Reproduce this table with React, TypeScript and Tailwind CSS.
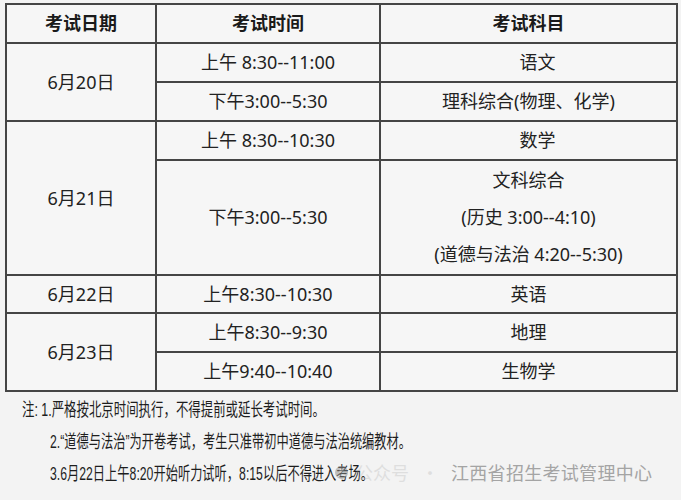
import React from "react";

const cell = "border-2 border-[#454545] text-center align-middle p-0";

export default function App() {
  return (
    <div
      className="w-[681px] h-[500px] bg-[#f3f3f3] overflow-hidden relative text-[#222]"
      style={{ fontFamily: '"Noto Sans", "Noto Sans CJK SC", sans-serif' }}
    >
      <div className="pt-[3px] pl-[5px]">
        <table className="border-collapse bg-[#f6f6f6] text-[18px] w-[671px] table-fixed">
          <colgroup>
            <col className="w-[150px]" />
            <col className="w-[224px]" />
            <col className="w-[297px]" />
          </colgroup>
          <tbody>
            <tr className="h-[39px] font-bold text-[#1a1a1a]">
              <td className={cell}>考试日期</td>
              <td className={cell}>考试时间</td>
              <td className={cell}>考试科目</td>
            </tr>
            <tr className="h-[39px]">
              <td className={cell} rowSpan={2}>6月20日</td>
              <td className={cell}>上午 8:30--11:00</td>
              <td className={cell + " pl-[18px]"}>语文</td>
            </tr>
            <tr className="h-[39px]">
              <td className={cell}>下午3:00--5:30</td>
              <td className={cell}>理科综合(物理、化学)</td>
            </tr>
            <tr className="h-[39px]">
              <td className={cell} rowSpan={2}>6月21日</td>
              <td className={cell}>上午 8:30--10:30</td>
              <td className={cell + " pl-[18px]"}>数学</td>
            </tr>
            <tr className="h-[115px]">
              <td className={cell}>下午3:00--5:30</td>
              <td className={cell + " leading-[37px]"}>
                <div>文科综合</div>
                <div>(历史 3:00--4:10)</div>
                <div>(道德与法治 4:20--5:30)</div>
              </td>
            </tr>
            <tr className="h-[38px]">
              <td className={cell}>6月22日</td>
              <td className={cell}>上午8:30--10:30</td>
              <td className={cell}>英语</td>
            </tr>
            <tr className="h-[39px]">
              <td className={cell} rowSpan={2}>6月23日</td>
              <td className={cell}>上午8:30--9:30</td>
              <td className={cell}>地理</td>
            </tr>
            <tr className="h-[39px]">
              <td className={cell}>上午9:40--10:40</td>
              <td className={cell}>生物学</td>
            </tr>
          </tbody>
        </table>
      </div>

      <div
        className="text-[18px] text-[#1e1e1e] leading-[32px] mt-[2px]"
        style={{ fontFamily: '"Liberation Sans", "Noto Sans CJK SC", sans-serif' }}
      >
        <div className="pl-[22px] whitespace-nowrap">
          <div className="origin-left scale-x-[0.69] w-max">注: 1.严格按北京时间执行，不得提前或延长考试时间。</div>
        </div>
        <div className="pl-[50px] whitespace-nowrap">
          <div className="origin-left scale-x-[0.68] w-max">2.“道德与法治”为开卷考试，考生只准带初中道德与法治统编教材。</div>
        </div>
        <div className="pl-[50px] whitespace-nowrap">
          <div className="origin-left scale-x-[0.68] w-max">3.6月22日上午8:20开始听力试听，8:15以后不得进入考场。</div>
        </div>
      </div>

      <div
        className="absolute left-[335px] top-[459px] flex items-center text-[18px] text-[#a4a4a4] whitespace-nowrap"
        style={{ fontFamily: '"Noto Sans CJK SC", sans-serif' }}
      >
        <svg width="13" height="13" viewBox="0 0 13 13" className="mr-[7px] opacity-50">
          <circle cx="6.5" cy="6.5" r="6.5" fill="#8a8a8a" />
          <circle cx="6.5" cy="5" r="2.2" fill="#d8d8d8" />
          <path d="M2.6 10.6 C3.6 8.4 9.4 8.4 10.4 10.6" stroke="#d8d8d8" strokeWidth="1.6" fill="none" />
        </svg>
        <span className="opacity-25">公众号</span>
        <span className="mx-[12px] opacity-25">·</span>
        <span className="tracking-[0.3px]">江西省招生考试管理中心</span>
      </div>
    </div>
  );
}
